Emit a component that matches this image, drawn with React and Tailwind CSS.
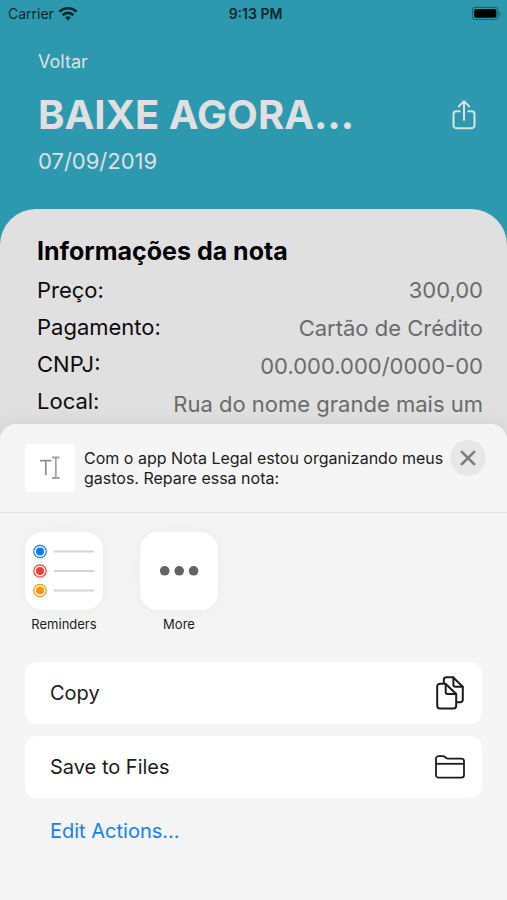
const noteFields = [
  { label: "Preço:", value: "300,00" },
  { label: "Pagamento:", value: "Cartão de Crédito" },
  { label: "CNPJ:", value: "00.000.000/0000-00" },
  { label: "Local:", value: "Rua do nome grande mais um" },
];

function WifiIcon() {
  return (
    <svg className="h-4 w-5" viewBox="0 0 20 16" fill="none" stroke="currentColor" strokeWidth="2.7" aria-hidden="true">
      <path d="M1.4 5.8a12.2 12.2 0 0 1 17.2 0" />
      <path d="M4.6 9.2a7.6 7.6 0 0 1 10.8 0" />
      <path d="M10 14.4l-2.8-2.9a4 4 0 0 1 5.6 0z" fill="currentColor" stroke="none" />
    </svg>
  );
}

function BatteryIcon() {
  return (
    <svg className="h-4 w-8" viewBox="0 0 32 16" aria-hidden="true">
      <rect x="1.5" y="1.3" width="25.5" height="12.2" rx="3.5" fill="none" stroke="#1c6472" strokeWidth="1.2" />
      <rect x="3.2" y="3" width="22.2" height="8.8" rx="2" fill="#000" />
      <path d="M28.6 5.4c1.7.7 1.7 3.6 0 4.3z" fill="#1c6472" />
    </svg>
  );
}

function ShareIcon() {
  return (
    <svg className="h-8 w-6" viewBox="0 0 24 32" fill="none" stroke="currentColor" strokeWidth="2" strokeLinecap="round" strokeLinejoin="round" aria-hidden="true">
      <path d="M7.6 12.2H4.3A2.8 2.8 0 0 0 1.5 15v11.4a2.8 2.8 0 0 0 2.8 2.8h15.4a2.8 2.8 0 0 0 2.8-2.8V15a2.8 2.8 0 0 0-2.8-2.8h-3.3" />
      <path d="M12 21.1V2.4M6.8 7.4L12 2.2l5.2 5.2" />
    </svg>
  );
}

function TextIcon() {
  return (
    <svg className="h-6 w-5" viewBox="0 0 20 24" fill="none" stroke="#8e8e8e" aria-hidden="true">
      <path d="M0 4.7h11.5M5.8 4.7V19" strokeWidth="1.7" />
      <path d="M12 1.5h7.5M12 22h7.5M15.8 1.5V22" stroke="#a2a2a2" strokeWidth="1.8" />
    </svg>
  );
}

function CloseIcon() {
  return (
    <svg className="h-4 w-4" viewBox="0 0 16 16" stroke="currentColor" strokeWidth="2.6" strokeLinecap="round" aria-hidden="true">
      <path d="M1.8 1.8l12.4 12.4M14.2 1.8L1.8 14.2" />
    </svg>
  );
}

function RemindersIcon() {
  const rows = [
    { y: 19.5, color: "#0a7aff" },
    { y: 39, color: "#ff3b30" },
    { y: 58.5, color: "#ff9500" },
  ];

  return (
    <svg className="h-full w-full" viewBox="0 0 78 78" fill="none" aria-hidden="true">
      {rows.map((row) => (
        <g key={row.y}>
          <circle cx="15" cy={row.y} r="6.2" stroke={row.color} strokeWidth="1.2" />
          <circle cx="15" cy={row.y} r="4" fill={row.color} />
          <path d={`M29 ${row.y}h40`} stroke="#d4d4d6" strokeWidth="1.8" />
        </g>
      ))}
    </svg>
  );
}

function MoreIcon() {
  return (
    <svg className="h-full w-full" viewBox="0 0 78 78" fill="#636366" aria-hidden="true">
      <circle cx="24.7" cy="38.8" r="4.8" />
      <circle cx="39.2" cy="38.8" r="4.8" />
      <circle cx="53.6" cy="38.8" r="4.8" />
    </svg>
  );
}

function CopyIcon() {
  return (
    <svg className="h-9 w-8" viewBox="0 0 32 36" fill="none" stroke="currentColor" strokeWidth="2" strokeLinecap="round" strokeLinejoin="round" aria-hidden="true">
      <path d="M9.8 8V5a2.7 2.7 0 0 1 2.7-2.7h6.5l9.8 9.4v13a2.6 2.6 0 0 1-2.6 2.6h-3.4" />
      <path d="M19.4 2.6v7.1a2 2 0 0 0 2 2h7" />
      <path d="M11.5 8.7H5.9a2.7 2.7 0 0 0-2.7 2.7v19.4a2.7 2.7 0 0 0 2.7 2.7h13.6a2.7 2.7 0 0 0 2.7-2.7V19z" />
      <path d="M11.7 9v8a2 2 0 0 0 2 2h8.2" />
    </svg>
  );
}

function FolderIcon() {
  return (
    <svg className="h-6 w-8" viewBox="0 0 32 24" fill="none" stroke="currentColor" strokeWidth="1.8" strokeLinejoin="round" aria-hidden="true">
      <path d="M2 20V3.8a2.7 2.7 0 0 1 2.7-2.7h4.1c.9 0 1.6.3 2.2.9l.9.8c.6.5 1.2.8 2 .8h13.4A2.7 2.7 0 0 1 30 6.3V20a2.7 2.7 0 0 1-2.7 2.7H4.7A2.7 2.7 0 0 1 2 20z" />
      <path d="M2 8.8h28" />
    </svg>
  );
}

const shareTargets = [
  { label: "Reminders", Icon: RemindersIcon },
  { label: "More", Icon: MoreIcon },
];

const actions = [
  { label: "Copy", Icon: CopyIcon },
  { label: "Save to Files", Icon: FolderIcon },
];

function StatusBar() {
  return (
    <div className="grid h-7 grid-cols-3 items-center pl-2 pr-1 text-sm text-[#06262c]">
      <div className="flex items-center gap-1">
        <span>Carrier</span>
        <WifiIcon />
      </div>
      <span className="text-center font-semibold">9:13 PM</span>
      <div className="flex justify-end">
        <BatteryIcon />
      </div>
    </div>
  );
}

function ShareSheet() {
  return (
    <section aria-label="Share" className="flex grow flex-col rounded-t-2xl bg-[#f5f5f5] shadow-[0_0_20px_rgba(0,0,0,0.08)]">
      <header className="flex h-[89px] items-start gap-[9px] border-b border-[#e2e2e2] pl-[25px] pr-[21px] pt-5">
        <div className="flex h-12 w-[50px] shrink-0 items-center justify-center rounded-sm bg-white">
          <TextIcon />
        </div>
        <p className="grow pt-1 text-base leading-5 text-[#1c1c1c]">
          Com o app Nota Legal estou organizando meus gastos. Repare essa nota:
        </p>
        <button type="button" aria-label="Close" className="-ml-1 -mt-1 flex h-9 w-9 shrink-0 items-center justify-center rounded-full bg-[#e7e7e7] text-[#7c7c7e]">
          <CloseIcon />
        </button>
      </header>

      <div className="flex gap-[37px] px-[25px] pt-[19px]">
        {shareTargets.map(({ label, Icon }) => (
          <button key={label} type="button" className="flex w-[78px] flex-col items-center gap-1">
            <span className="h-[78px] w-[78px] rounded-[18px] bg-white shadow-[0_0_18px_rgba(0,0,0,0.05)]">
              <Icon />
            </span>
            <span className="text-[13px] leading-5 text-[#1c1c1c]">{label}</span>
          </button>
        ))}
      </div>

      <div className="flex flex-col gap-3 px-[25px] pt-7">
        {actions.map(({ label, Icon }) => (
          <button key={label} type="button" className="flex h-[62px] items-center justify-between rounded-xl bg-white pl-[25px] pr-4 text-xl text-[#1c1c1c]">
            <span>{label}</span>
            <Icon />
          </button>
        ))}
      </div>

      <button type="button" className="mt-[17px] self-start pl-[50px] text-xl leading-8 text-[#1480fb]">
        Edit Actions...
      </button>
    </section>
  );
}

export default function App() {
  return (
    <div className="flex min-h-screen flex-col bg-[#2c99af] font-['Inter','Liberation_Sans',sans-serif]">
      <StatusBar />

      <header className="pb-8 pl-[38px] pr-[31px] pt-5 text-[#e0e0e0]">
        <a href="#" className="block text-lg leading-7">Voltar</a>
        <div className="mt-[15px] flex items-center justify-between">
          <h1 className="text-[40px] font-bold leading-12">BAIXE AGORA…</h1>
          <button type="button" aria-label="Compartilhar">
            <ShareIcon />
          </button>
        </div>
        <p className="mt-[6px] text-[22px] leading-8">07/09/2019</p>
      </header>

      <main className="flex grow flex-col rounded-t-[36px] bg-[#e0e0e0]">
        <section className="pl-[37px] pr-6 pt-6">
          <h2 className="text-[25px] font-bold leading-9 text-black">Informações da nota</h2>
          <div className="flex justify-between pt-[7px] text-[22px] leading-7">
            <div className="flex flex-col gap-[9px] text-[#0c0c0c]">
              {noteFields.map((field) => (
                <span key={field.label}>{field.label}</span>
              ))}
            </div>
            <div className="flex flex-col gap-[10px] text-right text-[#6b6b6b]">
              {noteFields.map((field) => (
                <span key={field.label}>{field.value}</span>
              ))}
            </div>
          </div>
        </section>

        <div className="flex grow flex-col pt-[6px]">
          <ShareSheet />
        </div>
      </main>
    </div>
  );
}
